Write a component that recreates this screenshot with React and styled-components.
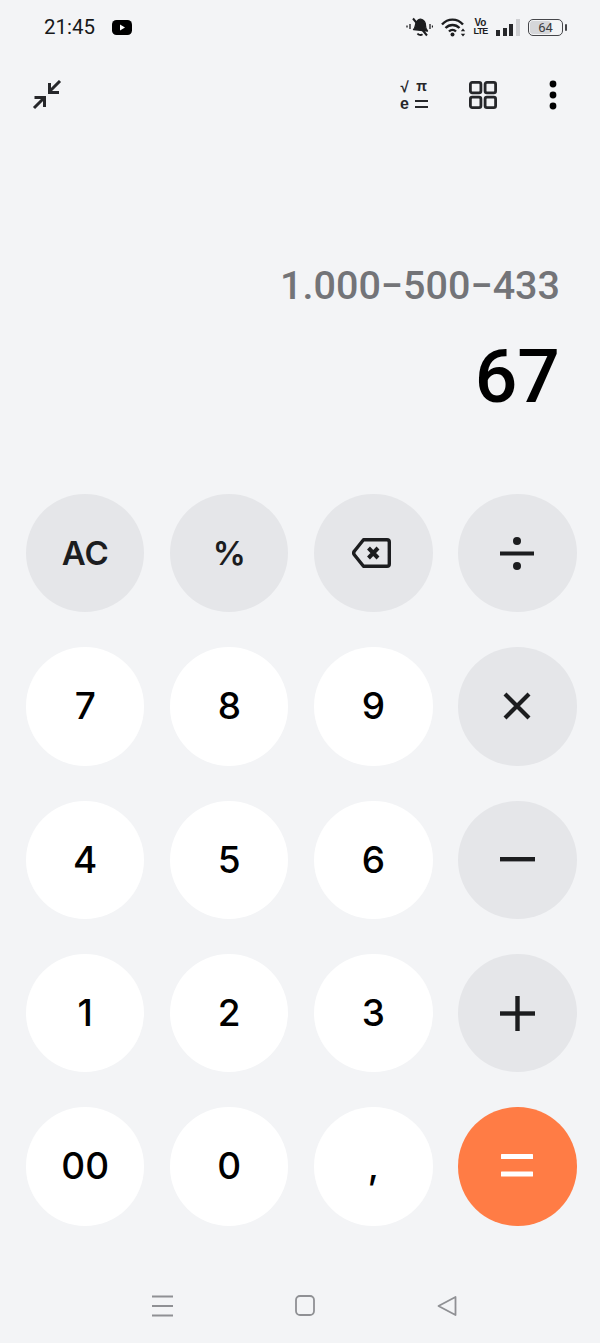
import React from 'react'
import styled, { createGlobalStyle } from 'styled-components'

const GlobalStyle = createGlobalStyle`
  html, body { margin: 0; padding: 0; background: #f3f4f6; }
  * { box-sizing: border-box; }
`

const KEYS = [
  { label: 'AC', kind: 'fn' },
  { label: '%', kind: 'fn' },
  { icon: 'back', kind: 'fn' },
  { icon: 'divide', kind: 'fn' },
  { label: '7' }, { label: '8' }, { label: '9' },
  { icon: 'times', kind: 'fn' },
  { label: '4' }, { label: '5' }, { label: '6' },
  { icon: 'minus', kind: 'fn' },
  { label: '1' }, { label: '2' }, { label: '3' },
  { icon: 'plus', kind: 'fn' },
  { label: '00' }, { label: '0' }, { label: ',' },
  { icon: 'equals', kind: 'eq' },
]

function KeyIcon({ name }) {
  if (name === 'back') {
    return (
      <svg width="39" height="30" viewBox="0 0 39 30" fill="none" stroke="#1c1d1f" strokeWidth="3.4" style={{ marginRight: 3 }}>
        <path d="M11.500 1.700H35a2.300 2.300 0 0 1 2.300 2.300v22a2.300 2.300 0 0 1-2.300 2.300H11.500L2.500 17a3 3 0 0 1 0-4Z" strokeLinejoin="round" />
        <path d="M16.500 10l9.500 10M26 10l-9.500 10" strokeWidth="4" />
      </svg>
    )
  }
  if (name === 'divide') {
    return (
      <svg width="34" height="33" viewBox="0 0 34 33" fill="#1c1d1f">
        <circle cx="17" cy="4" r="4" />
        <rect x="0" y="14.500" width="34" height="4" />
        <circle cx="17" cy="29" r="4" />
      </svg>
    )
  }
  if (name === 'times') {
    return (
      <svg width="30" height="30" viewBox="0 0 30 30" stroke="#1c1d1f" strokeWidth="4.200">
        <path d="M3 3l24 24M27 3L3 27" />
      </svg>
    )
  }
  if (name === 'minus') {
    return (
      <svg width="35" height="5" viewBox="0 0 35 5" fill="#1c1d1f">
        <rect width="35" height="4.400" />
      </svg>
    )
  }
  if (name === 'plus') {
    return (
      <svg width="35" height="35" viewBox="0 0 35 35" fill="#1c1d1f">
        <rect y="15.300" width="35" height="4.400" />
        <rect x="15.300" width="4.400" height="35" />
      </svg>
    )
  }
  return (
    <svg width="32" height="23" viewBox="0 0 32 23" fill="#fff" style={{ marginBottom: 2 }}>
      <rect width="32" height="5" rx="0.500" />
      <rect y="17.500" width="32" height="5" rx="0.500" />
    </svg>
  )
}

export default function App() {
  return (
    <Page>
      <GlobalStyle />
      <StatusBar>
        <StatusLeft>
          <Clock>21:45</Clock>
          <svg width="20" height="15" viewBox="0 0 20 15">
            <rect width="20" height="15" rx="4.500" fill="#000" />
            <path d="M8 4.500v6l5-3Z" fill="#fff" />
          </svg>
        </StatusLeft>
        <StatusRight>
          <svg width="27" height="20" viewBox="0 0 27 20" fill="none" stroke="#1c1d1f">
            <path d="M7.500 12.500c2-1.500 1.500-4 2.500-6.500 1-2.800 3.500-4.500 6-3.500s3.500 3.500 3.500 6c0 2.500.5 4 2 5.500Z" fill="#1c1d1f" strokeWidth="1.300" strokeLinejoin="round" />
            <path d="M11.500 16.500c1 1.600 3.400 2 5 .8" strokeWidth="1.800" />
            <path d="M7 1.500 21 18.500" strokeWidth="2" />
            <path d="M4 7v5M1 8.500v2M24 7v5M26.500 8.500v2" strokeWidth="1.300" />
          </svg>
          <svg width="25" height="19" viewBox="0 0 25 19" fill="none" stroke="#1c1d1f" strokeWidth="2.400">
            <path d="M1 6.500c6-6.500 15-6.500 21 0" />
            <path d="M4.500 10c4-4 10-4 14 0" />
            <path d="M8 13.500c2-2 5-2 7 0" />
            <circle cx="11.500" cy="16.500" r="2" fill="#1c1d1f" stroke="none" />
            <path d="M22 10.500l-2.200 2.800h4.400ZM22 18.500l-2.200-2.800h4.400Z" fill="#1c1d1f" stroke="none" />
          </svg>
          <VoLte>
            <span>Vo</span>
            <LteText>LTE</LteText>
          </VoLte>
          <SignalBars>
            <SignalBar $height={6} />
            <SignalBar $height={8} />
            <SignalBar $height={12} />
            <SignalBar $height={17} $off />
          </SignalBars>
          <Battery>
            <BatteryLevel style={{ width: '64%' }} />
            <BatteryText>64</BatteryText>
            <BatteryCap />
          </Battery>
        </StatusRight>
      </StatusBar>

      <Toolbar>
        <svg width="30" height="30" viewBox="0 0 30 30" fill="none" stroke="#26272a" strokeWidth="3">
          <path d="M28 1 17.500 11.500M17.500 3v9.500H27" />
          <path d="M2 28l10.500-10.500M2.500 17.500h10V27" />
        </svg>
        <ToolGroup>
          <SciIcon>
            <SciCell $size={15}>√</SciCell>
            <SciCell $size={14}>π</SciCell>
            <SciCell $size={16}>e</SciCell>
            <SciEquals />
          </SciIcon>
          <svg width="28" height="28" viewBox="0 0 28 28" fill="none" stroke="#26272a" strokeWidth="2.800">
            <rect x="1.400" y="1.400" width="10.500" height="10.500" rx="1.800" />
            <rect x="16.100" y="1.400" width="10.500" height="10.500" rx="1.800" />
            <rect x="1.400" y="16.100" width="10.500" height="10.500" rx="1.800" />
            <rect x="16.100" y="16.100" width="10.500" height="10.500" rx="1.800" />
          </svg>
          <MoreDots width="8" height="30" viewBox="0 0 8 30" fill="#000">
            <circle cx="4" cy="4" r="3.400" />
            <circle cx="4" cy="15" r="3.400" />
            <circle cx="4" cy="26" r="3.400" />
          </MoreDots>
        </ToolGroup>
      </Toolbar>

      <Display>
        <Expression>1.000−500−433</Expression>
        <Result>67</Result>
      </Display>

      <Keypad>
        {KEYS.map((key, i) => (
          <Key key={i} $kind={key.kind} $icon={!!key.icon}>
            {key.icon ? <KeyIcon name={key.icon} /> : key.label}
          </Key>
        ))}
      </Keypad>

      <NavBar>
        <svg width="21" height="22" viewBox="0 0 21 22" stroke="#8f9094" strokeWidth="1.800">
          <path d="M0 1.500h21M0 11h21M0 20.500h21" />
        </svg>
        <svg width="20" height="21" viewBox="0 0 20 21" fill="none" stroke="#8f9094" strokeWidth="1.800">
          <rect x="1" y="1" width="18" height="19" rx="4" />
        </svg>
        <svg width="20" height="22" viewBox="0 0 20 22" fill="none" stroke="#8f9094" strokeWidth="1.800" strokeLinejoin="round">
          <path d="M18.500 2v18L1.500 11Z" />
        </svg>
      </NavBar>
    </Page>
  )
}

const Page = styled.div`
  width: 600px;
  height: 1343px;
  overflow: hidden;
  display: flex;
  flex-direction: column;
  background: #f3f4f6;
  font-family: Roboto, "Liberation Sans", sans-serif;
  color: #000;
`

const StatusBar = styled.div`
  height: 54px;
  display: flex;
  align-items: center;
  justify-content: space-between;
  padding: 0 37px 0 44px;
`

const StatusLeft = styled.div`
  display: flex;
  align-items: center;
  gap: 17px;
`

const Clock = styled.span`
  font-size: 20.500px;
  color: #17181a;
`

const StatusRight = styled.div`
  display: flex;
  align-items: center;
  gap: 8px;
`

const VoLte = styled.div`
  width: 13px;
  display: flex;
  flex-direction: column;
  align-items: center;
  font-family: "Liberation Sans", sans-serif;
  font-size: 10px;
  font-weight: 700;
  line-height: 9px;
  color: #1c1d1f;
`

const LteText = styled.span`
  font-size: 9px;
  letter-spacing: -0.800px;
`

const SignalBars = styled.div`
  display: flex;
  align-items: flex-end;
  gap: 2.700px;
  height: 18px;
  margin-left: 1px;
`

const SignalBar = styled.div`
  width: 4px;
  height: ${p => p.$height}px;
  background: ${p => (p.$off ? '#cfd0d3' : '#26272a')};
`

const Battery = styled.div`
  position: relative;
  width: 35px;
  height: 17px;
  border: 1.500px solid #45464a;
  border-radius: 5px;
  display: flex;
  align-items: center;
  justify-content: center;
`

const BatteryLevel = styled.div`
  position: absolute;
  left: 1px;
  top: 1px;
  bottom: 1px;
  background: #d5d6d9;
  border-radius: 3px;
`

const BatteryText = styled.span`
  position: relative;
  font-size: 13px;
  color: #3a3b3e;
`

const BatteryCap = styled.div`
  position: absolute;
  right: -5px;
  top: 4px;
  width: 2px;
  height: 7px;
  background: #45464a;
  border-radius: 1px;
`

const Toolbar = styled.div`
  height: 82px;
  display: flex;
  align-items: center;
  justify-content: space-between;
  padding: 0 43px 0 32px;
`

const ToolGroup = styled.div`
  display: flex;
  align-items: center;
  gap: 41px;
`

const MoreDots = styled.svg`
  margin-left: 11px;
`

const SciIcon = styled.div`
  width: 30px;
  display: grid;
  grid-template-columns: 1fr 1fr;
  grid-auto-rows: 17px;
  align-items: center;
  justify-items: center;
  column-gap: 4px;
  font-family: "Liberation Sans", sans-serif;
  color: #26272a;
`

const SciCell = styled.span`
  font-size: ${p => p.$size}px;
  font-weight: 700;
  line-height: 17px;
`

const SciEquals = styled.div`
  width: 13px;
  height: 8px;
  border-top: 2.500px solid #26272a;
  border-bottom: 2.500px solid #26272a;
`

const Display = styled.div`
  height: 358px;
  display: flex;
  flex-direction: column;
  align-items: flex-end;
  justify-content: flex-end;
  padding: 0 40px 74px 0;
`

const Expression = styled.div`
  font-size: 39.500px;
  font-weight: 500;
  line-height: 46px;
  color: #737478;
`

const Result = styled.div`
  margin-top: 23px;
  font-size: 75px;
  font-weight: 550;
  line-height: 88px;
  color: #000;
`

const Keypad = styled.div`
  display: grid;
  grid-template-columns: repeat(4, 118.400px);
  column-gap: 25.700px;
  row-gap: 34.900px;
  padding: 0 26px;
`

const KEY_BG = { fn: '#e5e6e9', eq: '#ff7c45' }

const Key = styled.button`
  width: 118.400px;
  height: 118.400px;
  padding: 0 0 ${p => (p.$icon ? 0 : 1)}px;
  border: none;
  border-radius: 50%;
  display: flex;
  align-items: center;
  justify-content: center;
  background: ${p => KEY_BG[p.$kind] || '#fff'};
  font-family: Inter, "Noto Sans", sans-serif;
  font-size: ${p => (p.$kind === 'fn' ? 33 : 37)}px;
  font-weight: ${p => (p.$kind === 'fn' ? 600 : 550)};
  color: ${p => (p.$kind === 'fn' ? '#1c1d1f' : '#000')};
`

const NavBar = styled.div`
  flex: 1;
  display: flex;
  align-items: center;
  gap: 122px;
  padding: 43px 0 0 152px;
`
